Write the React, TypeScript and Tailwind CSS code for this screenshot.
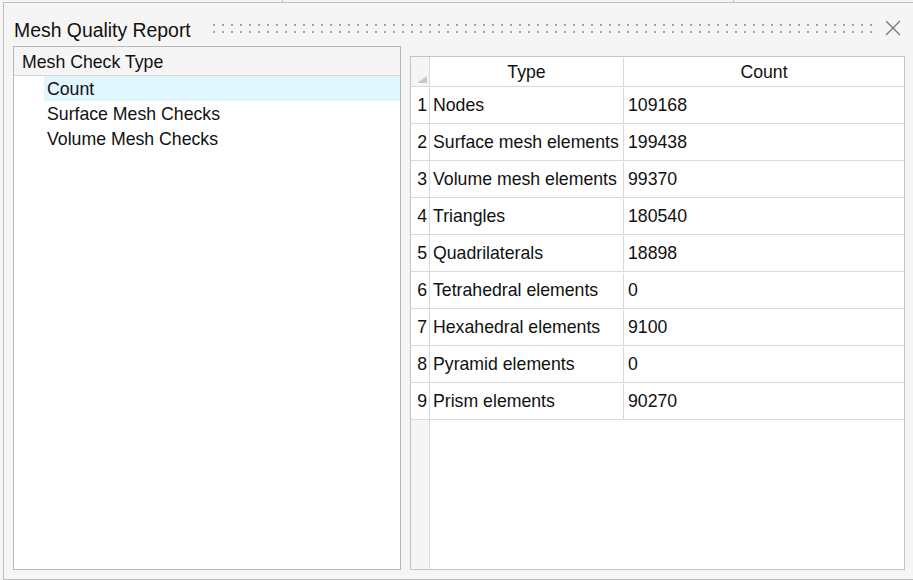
import { X } from "lucide-react";

const rows = [
  { type: "Nodes", count: "109168" },
  { type: "Surface mesh elements", count: "199438" },
  { type: "Volume mesh elements", count: "99370" },
  { type: "Triangles", count: "180540" },
  { type: "Quadrilaterals", count: "18898" },
  { type: "Tetrahedral elements", count: "0" },
  { type: "Hexahedral elements", count: "9100" },
  { type: "Pyramid elements", count: "0" },
  { type: "Prism elements", count: "90270" },
];

const checks = ["Count", "Surface Mesh Checks", "Volume Mesh Checks"];

function Grip() {
  return (
    <svg width="662" height="10" className="text-[#a3a3a3]">
      <defs>
        <pattern id="dots" width="9" height="7" patternUnits="userSpaceOnUse">
          <rect x="0" y="0" width="2" height="2" fill="currentColor" />
        </pattern>
      </defs>
      <rect x="0" y="0" width="662" height="10" fill="url(#dots)" />
    </svg>
  );
}

export default function App() {
  return (
    <div
      className="relative h-[580px] w-[913px] overflow-hidden bg-[#f5f5f5] text-[#111]"
      style={{ fontFamily: '"Liberation Sans", Arial, sans-serif' }}
    >
      {/* parent splitter ticks */}
      <div className="absolute left-[282px] top-0 h-[2px] w-px bg-[#bdbdbd]" />
      <div className="absolute left-[733px] top-0 h-[2px] w-px bg-[#bdbdbd]" />

      <div className="ml-[3px] mt-[2px] flex h-[578px] flex-col border-b border-l border-t border-[#bdbdbd]">

        {/* Title bar */}
        <div className="flex h-[43px] shrink-0 items-start">
          <span className="ml-[10px] mt-[15px] w-[176px] whitespace-nowrap text-[19.4px] leading-[24px]">
            Mesh Quality Report
          </span>
          <div className="ml-[23px] mt-[21px]">
            <Grip />
          </div>
          <button className="ml-auto mr-[7px] mt-[12px] text-[#7c7c7c]">
            <X size={26} strokeWidth={1.3} />
          </button>
        </div>

        {/* Body */}
        <div className="flex flex-1 gap-[9px] pb-[9px] pl-[9px]">

          {/* Left tree panel */}
          <div className="flex w-[388px] flex-col border border-[#b9b9b9] bg-white">
            <div className="flex h-[29px] items-center border-b border-[#d5d5d5] bg-[#f5f5f5] pl-[8px] pt-[2px] text-[17.7px]">
              Mesh Check Type
            </div>
            {checks.map((c, i) => (
              <div
                key={c}
                className={`ml-[30px] flex h-[25px] items-center pl-[3px] pt-[1px] text-[17.7px] ${
                  i === 0 ? "bg-[#e0f5fc]" : ""
                }`}
              >
                {c}
              </div>
            ))}
          </div>

          {/* Right table */}
          <div className="mt-[10px] flex w-[495px] border border-[#c4c4c4] bg-white">
            <div className="flex w-[19px] flex-col border-r border-[#d9d9d9] bg-[#f5f5f5]">
              <div className="relative h-[30px] border-b border-[#d9d9d9]">
                <svg width="10" height="7" className="absolute bottom-[3px] left-[6px]">
                  <polygon points="10,0 10,7 0,7" fill="#c8c8c8" />
                </svg>
              </div>
              {rows.map((r, i) => (
                <div
                  key={r.type}
                  className="flex h-[37px] items-center justify-end border-b border-[#d9d9d9] bg-white pr-[2px] pt-[1px] text-[17.7px]"
                >
                  {i + 1}
                </div>
              ))}
            </div>

            <div className="flex flex-1 flex-col">
              <div className="flex h-[30px] border-b border-[#d9d9d9] pt-[1px] text-[17.7px]">
                <div className="flex w-[194px] items-center justify-center border-r border-[#d9d9d9]">
                  Type
                </div>
                <div className="flex flex-1 items-center justify-center">Count</div>
              </div>
              {rows.map((r) => (
                <div key={r.type} className="flex h-[37px] border-b border-[#d9d9d9] pt-[1px] text-[17.7px]">
                  <div className="flex w-[194px] items-center border-r border-[#d9d9d9] pl-[3px]">
                    {r.type}
                  </div>
                  <div className="flex flex-1 items-center pl-[4px]">{r.count}</div>
                </div>
              ))}
            </div>
          </div>

        </div>
      </div>
    </div>
  );
}
